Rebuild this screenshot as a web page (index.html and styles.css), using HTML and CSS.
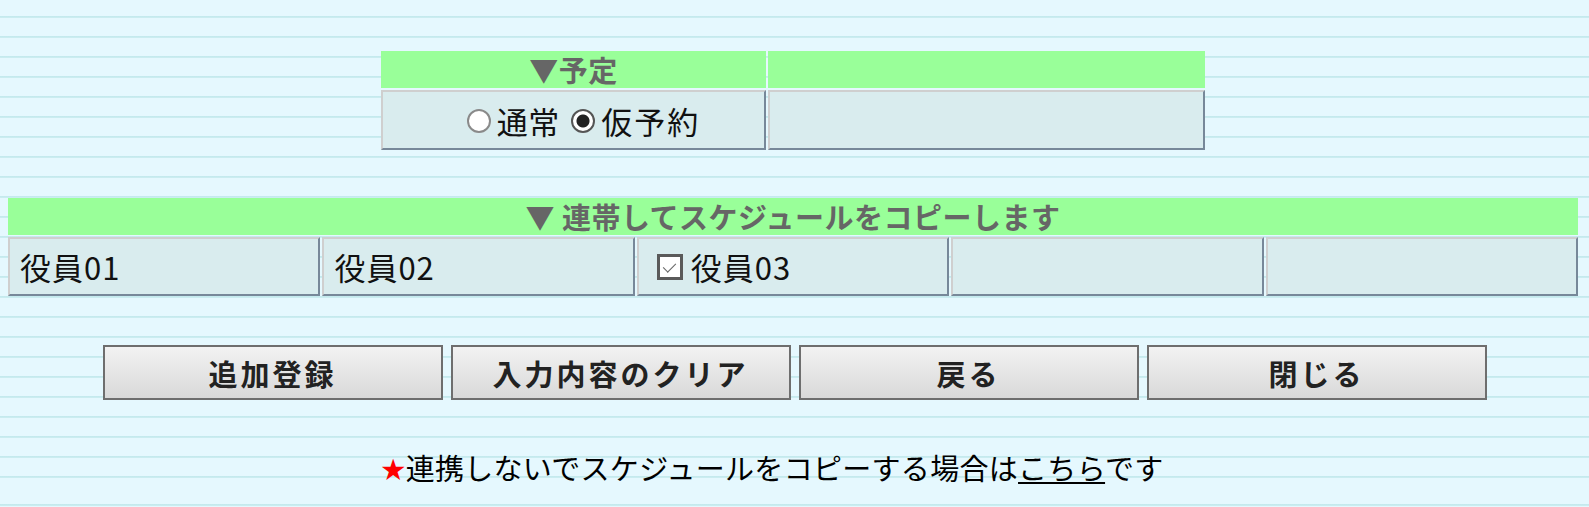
FILE: index.html
```html
<!DOCTYPE html>
<html lang="ja">
<head>
    <meta charset="UTF-8">
    <meta name="viewport" content="width=device-width, initial-scale=1.0">
    <title>スケジュール登録</title>
    <link rel="stylesheet" href="styles.css">
</head>
<body>
    <!-- 予定区分 -->
    <table class="yotei">
        <tr>
            <th class="head col1">▼予定</th>
            <th class="head"></th>
        </tr>
        <tr>
            <td class="cell center">
                <label class="opt"><input type="radio" name="kubun" value="0">通常</label>
                <label class="opt"><input type="radio" name="kubun" value="1" checked><span class="wide">仮予約</span></label>
            </td>
            <td class="cell"></td>
        </tr>
    </table>

    <!-- 連帯コピー -->
    <table class="copy">
        <tr>
            <th class="head" colspan="5">▼ 連帯してスケジュールをコピーします</th>
        </tr>
        <tr>
            <td class="cell">役員01</td>
            <td class="cell">役員02</td>
            <td class="cell"><label class="opt"><input type="checkbox" name="yakuin" value="03" checked>役員03</label></td>
            <td class="cell"></td>
            <td class="cell"></td>
        </tr>
    </table>

    <div class="buttons">
        <button type="submit">追加登録</button>
        <button type="reset">入力内容のクリア</button>
        <button type="button">戻る</button>
        <button type="button">閉じる</button>
    </div>

    <p class="note"><span class="star">★</span>連携しないでスケジュールをコピーする場合は<a href="#">こちら</a>です</p>
</body>
</html>
```

FILE: styles.css
```css
body {
    margin: 0;
    padding: 0 9px 0 6px;
    font-family: "Noto Sans CJK JP", "DejaVu Sans", sans-serif;
    font-size: 30px;
    color: #111;
    background: repeating-linear-gradient(to bottom,
        #e5f8fe 0, #e5f8fe 16px,
        #c2e8ec 16px, #cdeef1 18px,
        #e5f8fe 18px, #e5f8fe 20px);
}
table {
    border-spacing: 2px;
}
.yotei {
    width: 828px;
    margin: 49px auto 0;
    table-layout: fixed;
}
.yotei .col1 {
    width: 385px;
}
.copy {
    width: 100%;
    margin-top: 44px;
    table-layout: fixed;
}
.head {
    background: #99ff99;
    color: #666;
    font-weight: bold;
    font-size: 29px;
    letter-spacing: 0.5px;
    height: 37px;
    padding: 0;
    line-height: 37px;
    text-align: center;
}
.cell {
    background: #d9ecee;
    border: 2px solid;
    border-color: #cfcfcf #778899 #778899 #cfcfcf;
    height: 59px;
    padding: 0 0 0 10px;
    font-size: 31px;
    letter-spacing: 1px;
    line-height: 40px;
    box-sizing: border-box;
    vertical-align: middle;
}
.yotei .cell {
    height: 60px;
    letter-spacing: 0.5px;
}
.center {
    text-align: center;
    padding: 0 0 0 20px;
}
.opt {
    display: inline-flex;
    align-items: center;
}
.opt + .opt {
    margin-left: 4px;
}
.wide {
    letter-spacing: 2px;
}
input[type="radio"] {
    appearance: none;
    width: 24px;
    height: 24px;
    margin: 0 6px 0 0;
    border: 2px solid #8a8a8a;
    border-radius: 50%;
    background: #fff;
    box-sizing: border-box;
}
input[type="radio"]:checked {
    border-color: #555;
    background: radial-gradient(circle, #222 0, #222 6px, #fff 7px);
}
input[type="checkbox"] {
    appearance: none;
    position: relative;
    width: 26px;
    height: 26px;
    margin: 0 8px 0 8px;
    border: 3px solid #5a5a5a;
    background: #fff;
    box-sizing: border-box;
}
input[type="checkbox"]:checked::after {
    content: "";
    position: absolute;
    left: 6px;
    top: 3px;
    width: 6px;
    height: 11px;
    border: solid #666;
    border-width: 0 1px 1px 0;
    transform: rotate(45deg);
}
.buttons {
    display: flex;
    justify-content: center;
    gap: 8px;
    margin-top: 47px;
    padding-left: 3px;
}
button {
    width: 340px;
    height: 55px;
    margin: 0;
    border: 2px solid #6e6e6e;
    background: linear-gradient(#f2f2f2, #d9d9d9);
    font-family: inherit;
    font-size: 29px;
    font-weight: bold;
    color: #222;
    letter-spacing: 3px;
    padding: 0;
}
.note {
    margin: 47px 0 0;
    padding-right: 41px;
    text-align: center;
    font-size: 29px;
    letter-spacing: 0.3px;
    line-height: 40px;
    color: #000;
}
.star {
    color: #ff0000;
    font-size: 24px;
    vertical-align: 2px;
}
.note a {
    color: #000;
}
```
